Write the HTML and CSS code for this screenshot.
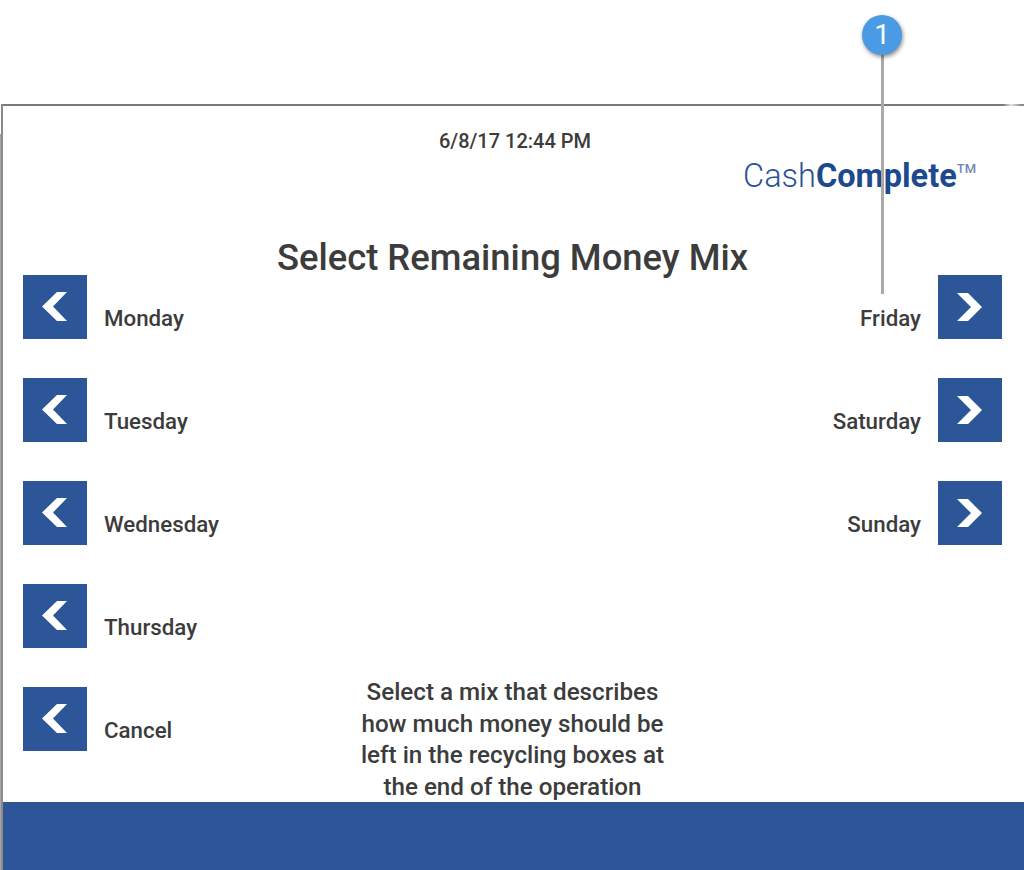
FILE: index.html
```html
<!DOCTYPE html>
<html lang="en">
<head>
    <title>Select Remaining Money Mix</title>
    <meta charset="UTF-8">
    <meta name="viewport" content="width=device-width, initial-scale=1">
    <link rel="stylesheet" href="styles.css">
</head>
<body>
    <!-- Callout over the screen -->
    <div class="callout">
        <div class="callout-line"></div>
        <div class="callout-dot">1</div>
    </div>

    <div class="screen">
        <div class="screen-top"></div>
        <div class="screen-body">
            <div class="date">6/8/17 12:44 PM</div>
            <div class="logo">Cash<strong>Complete</strong><sup>TM</sup></div>
            <h1 class="title">Select Remaining Money Mix</h1>

            <div class="menu">
                <div class="menu-col">
                    <div class="menu-row">
                        <div class="btn"><svg viewBox="0 0 64 64"><polygon points="19,31.5 34,17 44,17 30,31.5 44,46 34,46"/></svg></div>
                        <span class="label">Monday</span>
                    </div>
                    <div class="menu-row">
                        <div class="btn"><svg viewBox="0 0 64 64"><polygon points="19,31.5 34,17 44,17 30,31.5 44,46 34,46"/></svg></div>
                        <span class="label">Tuesday</span>
                    </div>
                    <div class="menu-row">
                        <div class="btn"><svg viewBox="0 0 64 64"><polygon points="19,31.5 34,17 44,17 30,31.5 44,46 34,46"/></svg></div>
                        <span class="label">Wednesday</span>
                    </div>
                    <div class="menu-row">
                        <div class="btn"><svg viewBox="0 0 64 64"><polygon points="19,31.5 34,17 44,17 30,31.5 44,46 34,46"/></svg></div>
                        <span class="label">Thursday</span>
                    </div>
                    <div class="menu-row">
                        <div class="btn"><svg viewBox="0 0 64 64"><polygon points="19,31.5 34,17 44,17 30,31.5 44,46 34,46"/></svg></div>
                        <span class="label">Cancel</span>
                    </div>
                </div>

                <p class="message">Select a mix that describes<br>how much money should be<br>left in the recycling boxes at<br>the end of the operation</p>

                <div class="menu-col menu-col-right">
                    <div class="menu-row">
                        <span class="label">Friday</span>
                        <div class="btn"><svg viewBox="0 0 64 64"><polygon points="19,18 30,18 44,32 30,46 19,46 33,32"/></svg></div>
                    </div>
                    <div class="menu-row">
                        <span class="label">Saturday</span>
                        <div class="btn"><svg viewBox="0 0 64 64"><polygon points="19,18 30,18 44,32 30,46 19,46 33,32"/></svg></div>
                    </div>
                    <div class="menu-row">
                        <span class="label">Sunday</span>
                        <div class="btn"><svg viewBox="0 0 64 64"><polygon points="19,18 30,18 44,32 30,46 19,46 33,32"/></svg></div>
                    </div>
                </div>
            </div>
        </div>
        <div class="footer"></div>
    </div>
</body>
</html>
```

FILE: styles.css
```css
html, body { margin: 0; padding: 0; }
body { font-family: Roboto, "Liberation Sans", sans-serif; background: white; color: #3c3c3c; height: 870px; overflow: hidden; }

.callout { position: absolute; left: 862px; top: 15px; width: 40px; height: 280px; z-index: 2; }
.callout-dot { position: absolute; left: 0; top: 0; width: 40px; height: 40px; border-radius: 50%; background: #4a9be3; color: white; font-size: 28px; line-height: 40px; text-align: center; box-shadow: 1px 2px 4px rgba(0,0,0,0.45); }
.callout-line { position: absolute; left: 19px; top: 38px; width: 3px; height: 241px; background: #a9a9a9; }

.screen { position: relative; margin-top: 104px; height: 766px; box-sizing: border-box; margin-left: 1px; border-left: 2px solid #8a8a8a; display: flex; flex-direction: column; }
.screen::before { content: ""; position: absolute; left: -3px; top: 30px; bottom: 0; width: 1px; background: #a6a6a6; }
.screen-top { height: 2px; flex: none; background: linear-gradient(to right, #7a7a7a 1000px, #e4e4e4 1008px, #8a8a8a 1018px); }
.screen-body { flex: 1; min-height: 0; }
.footer { height: 68px; background: #2c5697; }

.date { font-size: 20px; font-weight: 500; text-align: center; line-height: 24px; padding-top: 23px; padding-left: 3px; }
.logo { font-size: 32.5px; font-weight: 300; color: #2a5398; text-align: right; line-height: 40px; padding-right: 48px; margin-top: 3px; }
.logo strong { font-weight: 700; color: #1d4a8f; }
.logo sup { font-size: 13px; font-weight: 500; color: #6f88b3; line-height: 0; vertical-align: 14px; }
.title { font-size: 36.4px; font-weight: 500; text-align: center; line-height: 42px; margin: 41px 2px 0 0; }

.menu { display: grid; grid-template-columns: 1fr auto 1fr; height: 528px; margin-top: -4px; padding: 0 22px 0 20px; }
.menu-col { display: flex; flex-direction: column; gap: 39px; }
.menu-col-right { align-items: flex-end; }
.menu-row { display: flex; align-items: flex-end; gap: 17px; height: 64px; }
.btn { width: 64px; height: 64px; background: #2c5697; flex: none; }
.btn svg { display: block; width: 64px; height: 64px; fill: white; }
.label { font-size: 22.3px; font-weight: 500; line-height: 26px; padding-bottom: 8px; }

.message { align-self: end; margin: 0; font-size: 24.2px; font-weight: 500; line-height: 31.5px; text-align: center; }
```
